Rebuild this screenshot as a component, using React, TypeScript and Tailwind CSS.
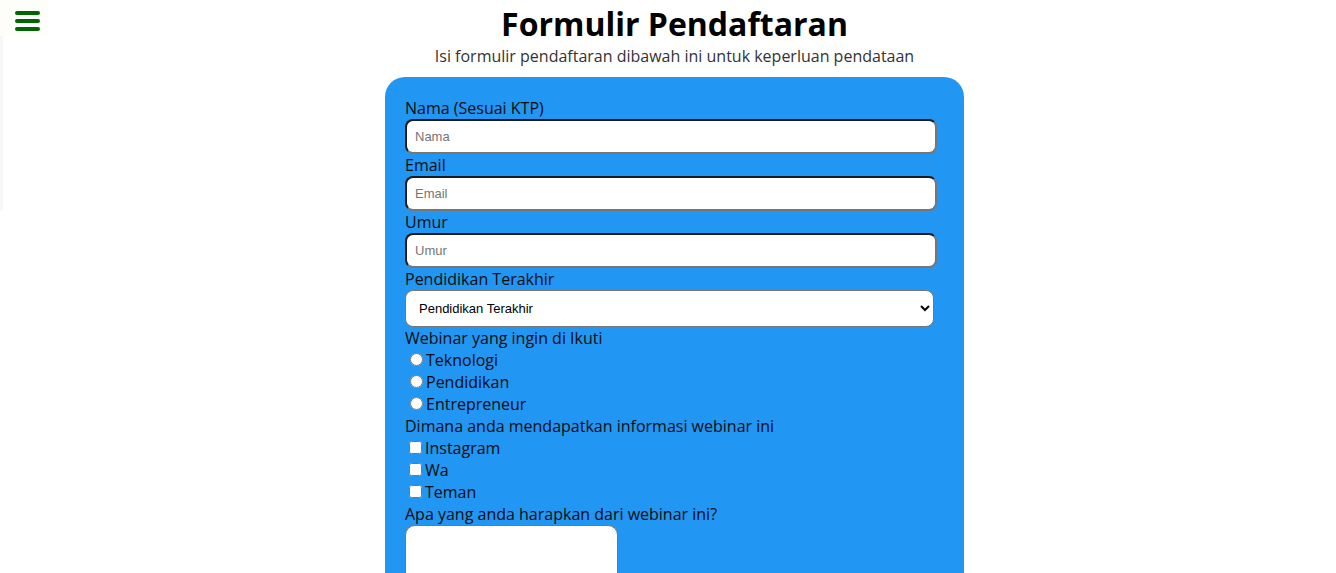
import { useState } from 'react';

const labelCls = 'block text-[16px] leading-[22px] text-[#0d0d0d]';
const inputCls =
  'block w-[532px] h-[35px] rounded-[8px] bg-white pl-[8px] text-[13px] text-black placeholder:text-[#757575] border-2 border-t-[#1b1b1b] border-l-[#1b1b1b] border-r-[#767676] border-b-[#767676] outline-none [font-family:"Liberation_Sans",Arial,sans-serif]';

export default function App() {
  const [nama, setNama] = useState('');
  const [email, setEmail] = useState('');
  const [umur, setUmur] = useState('');
  const [pendidikan, setPendidikan] = useState('');
  const [webinar, setWebinar] = useState('');

  return (
    <div className="relative h-screen overflow-hidden bg-white [font-family:'Open_Sans',sans-serif]">
      {/* sidebar ghost + toggle */}
      <div className="absolute left-0 top-0 w-[3px] h-[210px] bg-[#f7f7f7]" />
      <button className="absolute left-0 top-0 w-[48px] h-[36px] bg-[#fdfdfa] flex flex-col gap-[4px] pt-[11px] pl-[15px]">
        <span className="block w-[25px] h-[4px] rounded-full bg-[#006400]" />
        <span className="block w-[25px] h-[4px] rounded-full bg-[#006400]" />
        <span className="block w-[25px] h-[4px] rounded-full bg-[#006400]" />
      </button>

      <div className="pl-[13px] flex flex-col items-center">
        <h1 className="mt-[3px] text-[32px] leading-[42px] font-bold text-black">Formulir Pendaftaran</h1>
        <p className="text-[16px] leading-[22px] text-[#333]">Isi formulir pendaftaran dibawah ini untuk keperluan pendataan</p>

        <form className="mt-[10px] w-[579px] rounded-[20px] bg-[#2196f3] pt-[20px] pb-5 pl-[20px]">
          <label className={labelCls}>Nama (Sesuai KTP)</label>
          <input className={inputCls} placeholder="Nama" value={nama} onChange={(e) => setNama(e.target.value)} />
          <label className={labelCls}>Email</label>
          <input className={inputCls} placeholder="Email" value={email} onChange={(e) => setEmail(e.target.value)} />
          <label className={labelCls}>Umur</label>
          <input className={inputCls} placeholder="Umur" value={umur} onChange={(e) => setUmur(e.target.value)} />
          <label className={labelCls}>Pendidikan Terakhir</label>
          <select
            className='block w-[529px] h-[37px] rounded-[8px] bg-white border border-[#767676] pl-[9px] pr-[4px] text-[13px] text-black [font-family:"Liberation_Sans",Arial,sans-serif]'
            value={pendidikan}
            onChange={(e) => setPendidikan(e.target.value)}
          >
            <option value="">Pendidikan Terakhir</option>
            <option value="SMA">SMA</option>
            <option value="D3">D3</option>
            <option value="S1">S1</option>
            <option value="S2">S2</option>
          </select>

          <label className={labelCls}>Webinar yang ingin di Ikuti</label>
          {['Teknologi', 'Pendidikan', 'Entrepreneur'].map((w) => (
            <div key={w} className="text-[16px] leading-[22px] text-[#0d0d0d]">
              <input
                type="radio"
                name="webinar"
                className="ml-[5px] mr-[3px] mt-[3px]"
                checked={webinar === w}
                onChange={() => setWebinar(w)}
              />
              {w}
            </div>
          ))}

          <label className={labelCls}>Dimana anda mendapatkan informasi webinar ini</label>
          {['Instagram', 'Wa', 'Teman'].map((s) => (
            <div key={s} className="text-[16px] leading-[22px] text-[#0d0d0d]">
              <input type="checkbox" className="ml-[4px] mr-[3px] my-[3px]" />
              {s}
            </div>
          ))}

          <label className={labelCls}>Apa yang anda harapkan dari webinar ini?</label>
          <textarea className="block w-[213px] h-[80px] rounded-[10px] bg-white border border-[#767676] resize-none" />
        </form>
      </div>
    </div>
  );
}
